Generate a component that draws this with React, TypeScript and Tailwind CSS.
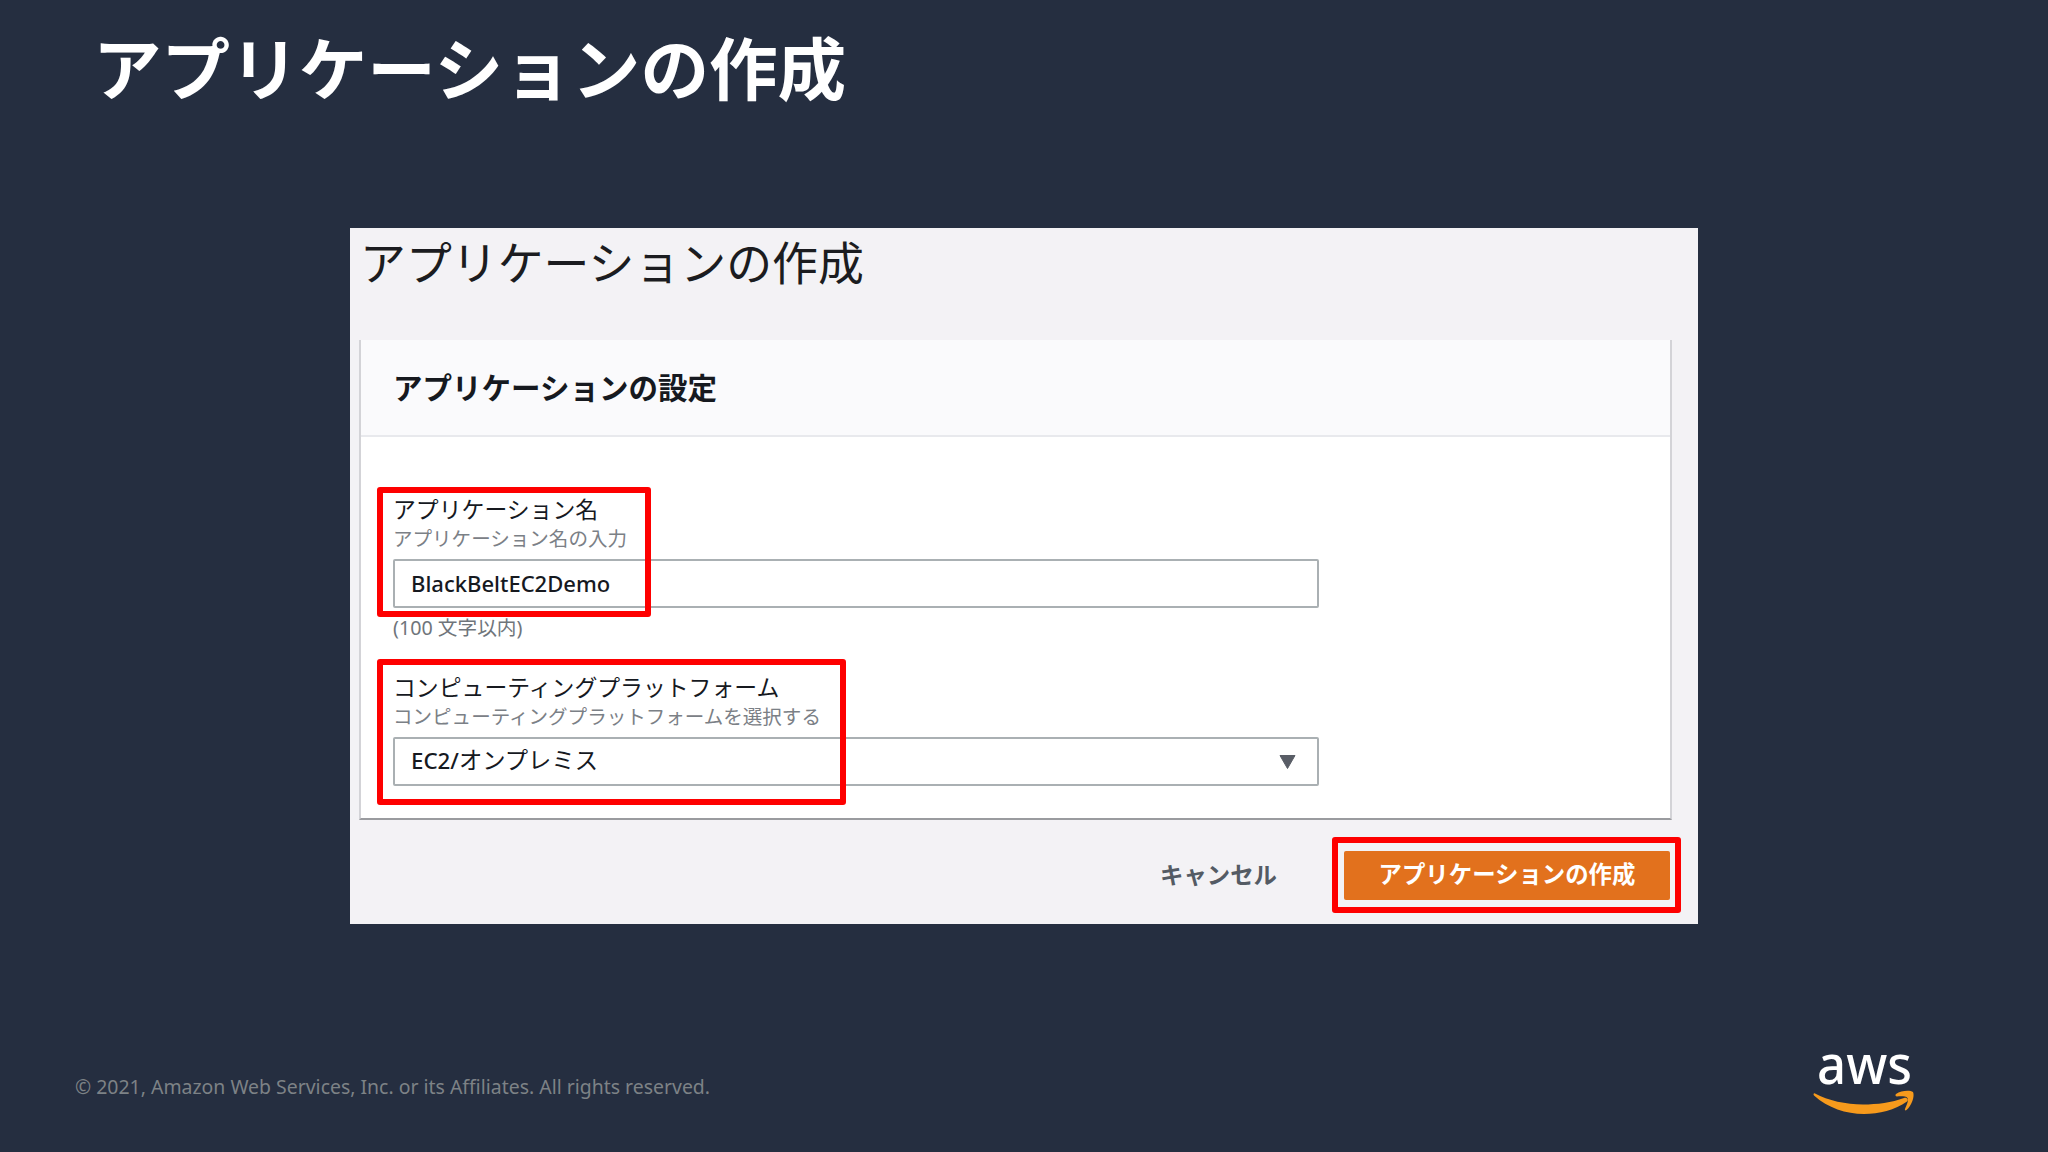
import type { ReactNode } from "react";

type FieldProps = {
  label: string;
  hint: string;
  children: ReactNode;
};

const Field = ({ label, hint, children }: FieldProps) => {
  return (
    <div className="flex flex-col">
      <div className="h-[30px] text-[22.85px] leading-[30px] text-[#16191f]">{label}</div>
      <div className="h-[28px] text-[19.55px] leading-[27px] text-[#7b8086]">{hint}</div>
      <div className="mt-[6px] flex h-[49px] w-[926px] items-center justify-between rounded-[2px] border-2 border-[#aab0b3] bg-white pr-[21px] pl-[16px] text-[#16191f]">
        {children}
      </div>
    </div>
  );
};

const AwsLogo = () => {
  return (
    <svg className="h-[92px] w-[106px]" viewBox="0 -26 106 92">
      <text
        x="4"
        y="34"
        fill="#ffffff"
        fontFamily="'Noto Sans', sans-serif"
        fontSize="55"
        fontWeight="500"
        textLength="95"
        lengthAdjust="spacingAndGlyphs"
      >
        aws
      </text>
      <path
        d="M2 43.500C15 50.500 33 54.500 50 54.500C64 54.500 79 52.500 91 48C94 47 96 50 94 51.500C82 60 66 64 51 64C33 64 15 58 1 45.500C0 44.200 0.800 42.700 2 43.500Z"
        fill="#f79a1c"
      />
      <path
        d="M83 44C88 40.500 97 40 100 42C102 46 98.500 56 93.500 60C92.500 60.800 91.500 60.300 92 59C93.500 55.500 96 50 94.500 48C93 46 87.500 46.200 84 46.500C82.500 46.500 82 45 83 44Z"
        fill="#f79a1c"
      />
    </svg>
  );
};

const App = () => {
  return (
    <div className="flex h-[1152px] w-[2048px] flex-col overflow-hidden bg-[#252e40] font-['Noto_Sans','Noto_Sans_CJK_JP',sans-serif]">
      <h1 className="h-[228px] pt-[15px] pl-[93px] font-['Noto_Sans_CJK_JP',sans-serif] text-[68.6px] leading-[100px] font-bold text-white">
        アプリケーションの作成
      </h1>

      <main className="relative ml-[350px] h-[696px] w-[1348px] bg-[#f3f2f5]">
        <h2 className="h-[112px] pt-[2px] pl-[10px] font-['Noto_Sans_CJK_JP',sans-serif] text-[45.9px] leading-[60px] font-normal text-[#1b1c20]">
          アプリケーションの作成
        </h2>

        <section className="ml-[9px] flex h-[480px] w-[1313px] flex-col border-x-2 border-b-2 border-x-[#d3d3d7] border-b-[#9a9b9f] bg-white">
          <header className="flex h-[97px] items-center border-b-2 border-[#e8e9ed] bg-[#fafafc] pb-[3px] pl-[32px] font-['Noto_Sans_CJK_JP',sans-serif] text-[29.5px] font-bold text-[#16191f]">
            アプリケーションの設定
          </header>
          <div className="flex flex-col pt-[58px] pl-[32px]">
            <Field label="アプリケーション名" hint="アプリケーション名の入力">
              <span className="text-[22px] font-medium">BlackBeltEC2Demo</span>
            </Field>
            <div className="mb-[28px] h-[37px] text-[19.7px] leading-[40px] text-[#6f757b]">(100 文字以内)</div>
            <Field label="コンピューティングプラットフォーム" hint="コンピューティングプラットフォームを選択する">
              <span className="pb-[2px] text-[23.3px]">
                <span className="text-[22.3px] font-medium">EC2/</span>オンプレミス
              </span>
              <svg className="h-[14px] w-[17px]" viewBox="0 0 17 14">
                <path d="M1 0.500H16L8.500 13.500Z" fill="#595d66" stroke="#595d66" strokeLinejoin="round" />
              </svg>
            </Field>
          </div>
        </section>

        <footer className="flex items-center justify-end pt-[31px] pr-[28px] font-['Noto_Sans_CJK_JP',sans-serif] text-[23.4px] font-bold">
          <button className="mr-[67px] pb-[2px] text-[#545b64]">キャンセル</button>
          <button className="h-[49px] w-[326px] rounded-[2px] bg-[#e2711d] pb-[3px] text-white">
            アプリケーションの作成
          </button>
        </footer>

        {/* highlight frames */}
        <div className="absolute top-[259px] left-[27px] h-[130px] w-[274px] rounded-[3px] border-[6px] border-[#fe0000]" />
        <div className="absolute top-[431px] left-[27px] h-[146px] w-[469px] rounded-[3px] border-[6px] border-[#fe0000]" />
        <div className="absolute top-[609px] left-[982px] h-[76px] w-[349px] rounded-[3px] border-[6px] border-[#fe0000]" />
      </main>

      <div className="flex flex-1 justify-between pr-[129px] pl-[75px]">
        <p className="pt-[148px] text-[19.44px] leading-[30px] text-[#7d8286]">
          © 2021, Amazon Web Services, Inc. or its Affiliates. All rights reserved.
        </p>
        <div className="pt-[100px]">
          <AwsLogo />
        </div>
      </div>
    </div>
  );
};

export default App;
